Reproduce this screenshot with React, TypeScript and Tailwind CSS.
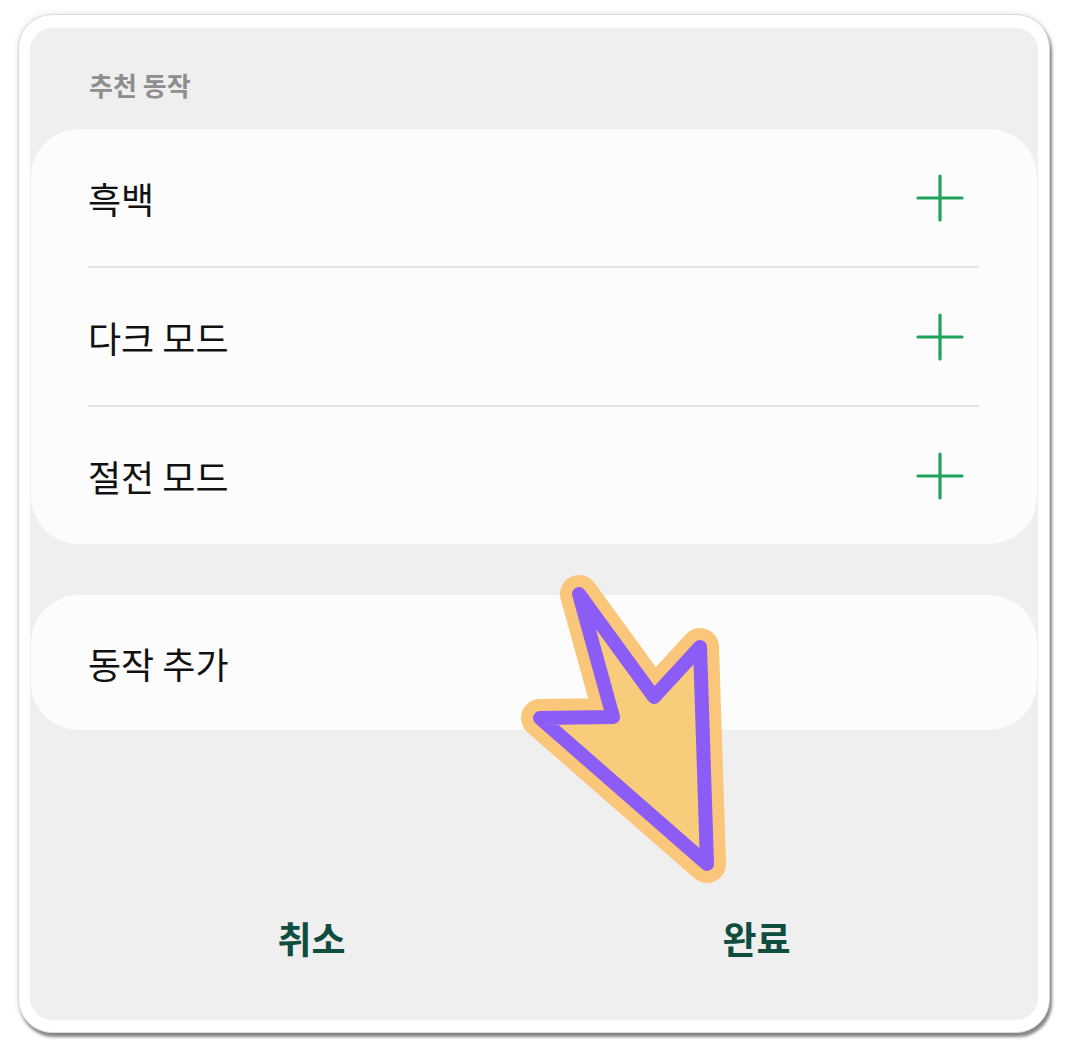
import React from 'react';

const font = { fontFamily: '"Noto Sans CJK KR", "Noto Sans", sans-serif' };

const PlusIcon: React.FC = () => (
  <svg width="48" height="48" viewBox="0 0 48 48" fill="none">
    <path d="M24 2v44M2 24h44" stroke="#1fa35b" strokeWidth="3.2" strokeLinecap="round" />
  </svg>
);

const Row: React.FC<{ label: string }> = ({ label }) => (
  <div className="flex items-center justify-between h-[137px] pl-[57px] pr-[73px]">
    <span className="text-[36px] text-[#111] leading-none">{label}</span>
    <PlusIcon />
  </div>
);

const Divider: React.FC = () => <div className="h-[2px] bg-[#e3e3e3] ml-[57px] mr-[58px]" />;

const Arrow: React.FC = () => {
  const pts = '579,594 654,697 700,647 707,864 540,718 613,717';
  return (
    <svg
      className="absolute left-0 top-0 pointer-events-none"
      width="1068"
      height="1053"
      viewBox="0 0 1068 1053"
    >
      <polygon points={pts} fill="#f8c878" stroke="#fac67a" strokeWidth="38" strokeLinejoin="round" />
      <polygon points={pts} fill="#f7cd7b" stroke="#8b5cf6" strokeWidth="14" strokeLinejoin="round" />
    </svg>
  );
};

const App: React.FC = () => {
  return (
    <div className="relative w-[1068px] h-[1053px] bg-white" style={font}>
      <div className="absolute left-[18px] top-[14px] w-[1032px] h-[1019px] rounded-[34px] bg-white border border-[#dadada] shadow-[2px_4px_3px_rgba(0,0,0,0.45),0_0_6px_rgba(0,0,0,0.12)] px-[11px] pt-[13px] pb-[12px]">
        <div className="flex flex-col h-full rounded-[22px] bg-[#efefef] px-[1px]">
          {/* Section title */}
          <div className="pt-[39px] pl-[58px] text-[26px] font-bold text-[#8e8e8e] leading-[36px]">추천 동작</div>

          {/* Recommended actions */}
          <div className="mt-[26px] rounded-[48px] bg-[#fcfcfc]">
            <Row label="흑백" />
            <Divider />
            <Row label="다크 모드" />
            <Divider />
            <Row label="절전 모드" />
          </div>

          {/* Add action */}
          <div className="mt-[51px] h-[135px] rounded-[48px] bg-[#fcfcfc] flex items-center pl-[57px]">
            <span className="text-[36px] text-[#111] leading-none">동작 추가</span>
          </div>

          {/* Buttons */}
          <div className="mt-auto mb-[63px] grid grid-cols-2 mx-[58px]">
            <button className="text-[37px] font-bold text-[#0f4d3e] leading-none">취소</button>
            <button className="text-[37px] font-bold text-[#0f4d3e] leading-none">완료</button>
          </div>
        </div>
      </div>
      <Arrow />
    </div>
  );
};

export default App;
